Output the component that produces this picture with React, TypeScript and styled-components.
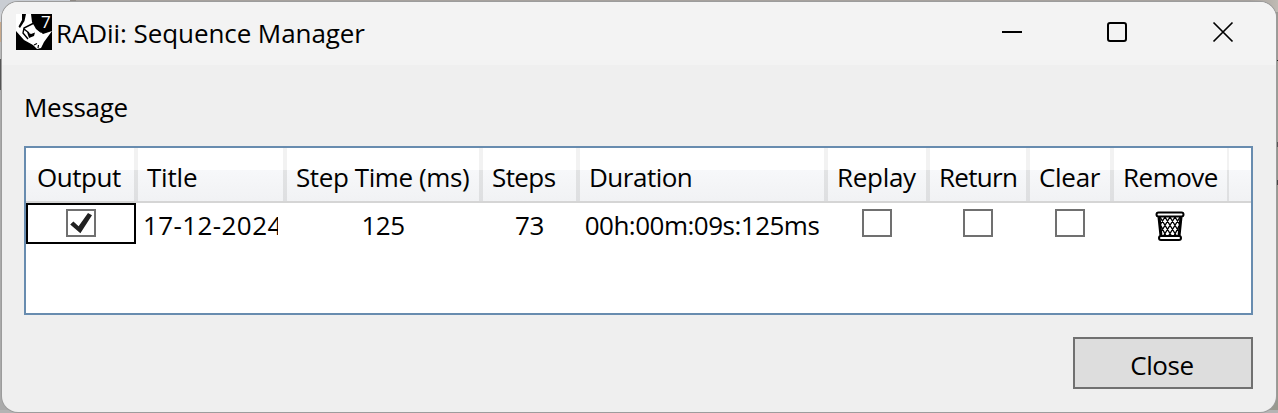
import React from "react";
import styled, { createGlobalStyle } from "styled-components";

const GlobalStyle = createGlobalStyle`
  * { box-sizing: border-box; }
  body {
    margin: 0;
    overflow: hidden;
    font-family: "Open Sans", "Noto Sans", sans-serif;
    font-size: 26px;
    color: #000;
  }
`;

const Desktop = styled.div`
  width: 1278px;
  height: 413px;
  padding: 2px 2px 1px;
  background:
    linear-gradient(#b4b4b4 0 0) 0 410px / 1278px 3px no-repeat,
    linear-gradient(90deg, #c9cdd3 0 70px, #8e8984 70px 76px, #a6a19d 76px 1250px, #c0bbb4 1278px) 0 0 / 1278px 12px no-repeat,
    linear-gradient(#9c9a94 0 60px, #222 60px 61px, #9a9d94 61px 142px, #555 142px 147px, #92958c 147px 180px, #444 180px 185px, #98998f 185px) 1264px 0 / 14px 413px no-repeat,
    linear-gradient(#d0d2d6 0 22px, #c9a98a 22px 42px, #b8b8b8 42px 59px, #555 59px 90px, #aaa 90px) 0 0 / 14px 413px no-repeat,
    #aaa;
`;

const Window = styled.main`
  display: flex;
  flex-direction: column;
  height: 410px;
  border-radius: 16px;
  overflow: hidden;
  background: #efefef;
  box-shadow: 0 0 0 1px #9c9c9c;
`;

const TitleBar = styled.header`
  display: flex;
  align-items: center;
  height: 63px;
  padding: 0 42px 2px 14px;
  background: #f3f3f3;
`;

const AppIcon = styled.svg`
  width: 36px;
  height: 36px;
  margin-bottom: 1px;
  overflow: visible;
`;

const Label = styled.span<{ $tracking?: number }>`
  line-height: 36px;
  white-space: pre;
  letter-spacing: ${(p) => p.$tracking ?? -0.45}px;
`;

const WindowTitle = styled(Label)`
  flex: 1;
  margin-left: 4px;
`;

const WindowControls = styled.div`
  display: flex;
  gap: 84px;
  margin-bottom: 2px;
`;

const ControlIcon = styled.svg`
  width: 22px;
  height: 22px;
  fill: none;
  stroke: #000;
  stroke-width: 2;
`;

const Content = styled.section`
  display: flex;
  flex-direction: column;
  padding: 24px 23px 0 22px;
`;

const Grid = styled.div`
  height: 169px;
  margin-top: 21px;
  border: 2px solid #688caf;
  background: #fff;
`;

const columns = "110px 149px 196px 97px 248px 102px 100px 84px 117px 1fr";

const HeaderRow = styled.div`
  display: grid;
  grid-template-columns: ${columns};
  height: 55px;
  border-bottom: 2px solid #d5d5d5;
  background: linear-gradient(#fff 0 22px, #f7f8fa 22px, #f1f2f4 53px);
`;

const HeaderCell = styled.div<{ $first?: boolean }>`
  display: flex;
  padding: 11px 0 0 11px;
  background: linear-gradient(#f2f2f2 0 22px, #e2e3e4 22px, #dedfe1) right / 2px 100% no-repeat,
    ${(p) => (p.$first ? "none" : "linear-gradient(#f2f2f2 0 22px, #e2e3e4 22px, #dedfe1) left / 2px 100% no-repeat")};
`;

const BodyRow = styled.div`
  display: grid;
  grid-template-columns: ${columns};
  height: 41px;
`;

const Cell = styled.div<{ $focused?: boolean; $text?: boolean }>`
  display: flex;
  justify-content: ${(p) => (p.$text ? "flex-start" : "center")};
  align-items: center;
  min-width: 0;
  padding: ${(p) => (p.$text ? "3px 0 0 7px" : "3px 0 0")};
  margin-right: ${(p) => (p.$text ? 7 : 0)}px;
  overflow: hidden;
  ${(p) => p.$focused && "border: 2px solid #000;"}
`;

const CheckBox = styled.svg`
  width: 30px;
  height: 28px;
  margin-bottom: 4px;
`;

const TrashIcon = styled.svg`
  width: 30px;
  height: 30px;
  margin: 1px 1px 0 0;
`;

const CloseButton = styled.button`
  display: flex;
  align-self: flex-end;
  justify-content: center;
  width: 180px;
  height: 52px;
  margin-top: 22px;
  padding: 8px 2px 0 0;
  border: 2px solid #707070;
  background: #ddd;
  color: #000;
  font: inherit;
`;

function Check({ checked = false }: { checked?: boolean }) {
  return (
    <CheckBox viewBox="0 0 30 28">
      <rect x="1" y="1" width="28" height="26" fill="#fff" stroke="#707070" strokeWidth="2" />
      {checked && <path d="M4.2 15.4 7.4 12.4 12.6 17.2 22 4 26 6.2 14.4 24.2Z" fill="#212121" />}
    </CheckBox>
  );
}

function RhinoIcon() {
  return (
    <AppIcon viewBox="0 0 36 36">
      <path d="M0 0h36v36H0z" fill="#000" />
      <path d="M0 0H16L17 8 22 16 27 20 36 17 28 28 25 34 21 35 17 31 8 26 0 17Z" fill="#fff" />
      <path d="M6 0H10L8.500 7 4 14 2.500 12.500 6 6Z" fill="#000" />
      <path d="M15 0 19 0 25 19 20 15 16 8Z" fill="#000" />
      <path d="M18 9 8 14 7 19 12 25M8 15l5 4" fill="none" stroke="#000" strokeWidth="1.4" />
      <path d="M11 18 15 20 19 18.500 18 22 13 24Z" fill="#000" />
      <path d="M18 31l3-1.500M22 34l.5-3" stroke="#000" strokeWidth="1.2" />
      <text x="25" y="14" fill="#fff" fontSize="17" fontFamily="Open Sans, sans-serif">7</text>
    </AppIcon>
  );
}

function Trash() {
  return (
    <TrashIcon viewBox="0 0 30 30" fill="none" stroke="#000" strokeWidth="2">
      <path d="M4 6 6 25M26 6l-2 19" strokeWidth="3" />
      <path d="M5 6 16.500 25M10 6l11.500 19M15 6l9 15M20 6l5 8M25 6 13.500 25M20 6 8.500 25M15 6 6 21M10 6 5 14M6 15l5 10M24 15l-5 10" strokeWidth="1.4" />
      <rect x="1.5" y="1.5" width="27" height="4" rx="2" fill="#fff" />
      <rect x="4" y="25" width="22" height="4" rx="2" fill="#fff" />
    </TrashIcon>
  );
}

const headings: { text: string; tracking?: number }[] = [
  { text: "Output" },
  { text: "Title", tracking: -0.2 },
  { text: "Step Time (ms)", tracking: -0.4 },
  { text: "Steps", tracking: -0.6 },
  { text: "Duration", tracking: -0.5 },
  { text: "Replay", tracking: -0.3 },
  { text: "Return", tracking: -0.7 },
  { text: "Clear", tracking: -0.3 },
  { text: "Remove", tracking: -0.5 },
];

export default function App() {
  return (
    <Desktop>
      <GlobalStyle />
      <Window>
        <TitleBar>
          <RhinoIcon />
          <WindowTitle $tracking={-0.08}>RADii: Sequence Manager</WindowTitle>
          <WindowControls>
            <ControlIcon viewBox="0 0 22 22"><path d="M2 11h20" /></ControlIcon>
            <ControlIcon viewBox="0 0 22 22"><rect x="2" y="2" width="18" height="18" rx="2" /></ControlIcon>
            <ControlIcon viewBox="0 0 22 22"><path d="m1.5 1.5 19 19m0-19-19 19" strokeWidth="1.7" /></ControlIcon>
          </WindowControls>
        </TitleBar>
        <Content>
          <Label $tracking={-0.3}>Message</Label>
          <Grid>
            <HeaderRow>
              {headings.map((h, i) => (
                <HeaderCell key={h.text} $first={i === 0}><Label $tracking={h.tracking}>{h.text}</Label></HeaderCell>
              ))}
            </HeaderRow>
            <BodyRow>
              <Cell $focused><Check checked /></Cell>
              <Cell $text><Label $tracking={0.4}>17-12-2024</Label></Cell>
              <Cell><Label>125</Label></Cell>
              <Cell><Label>73</Label></Cell>
              <Cell><Label $tracking={-0.5}>00h:00m:09s:125ms</Label></Cell>
              <Cell><Check /></Cell>
              <Cell><Check /></Cell>
              <Cell><Check /></Cell>
              <Cell><Trash /></Cell>
            </BodyRow>
          </Grid>
          <CloseButton><Label>Close</Label></CloseButton>
        </Content>
      </Window>
    </Desktop>
  );
}
